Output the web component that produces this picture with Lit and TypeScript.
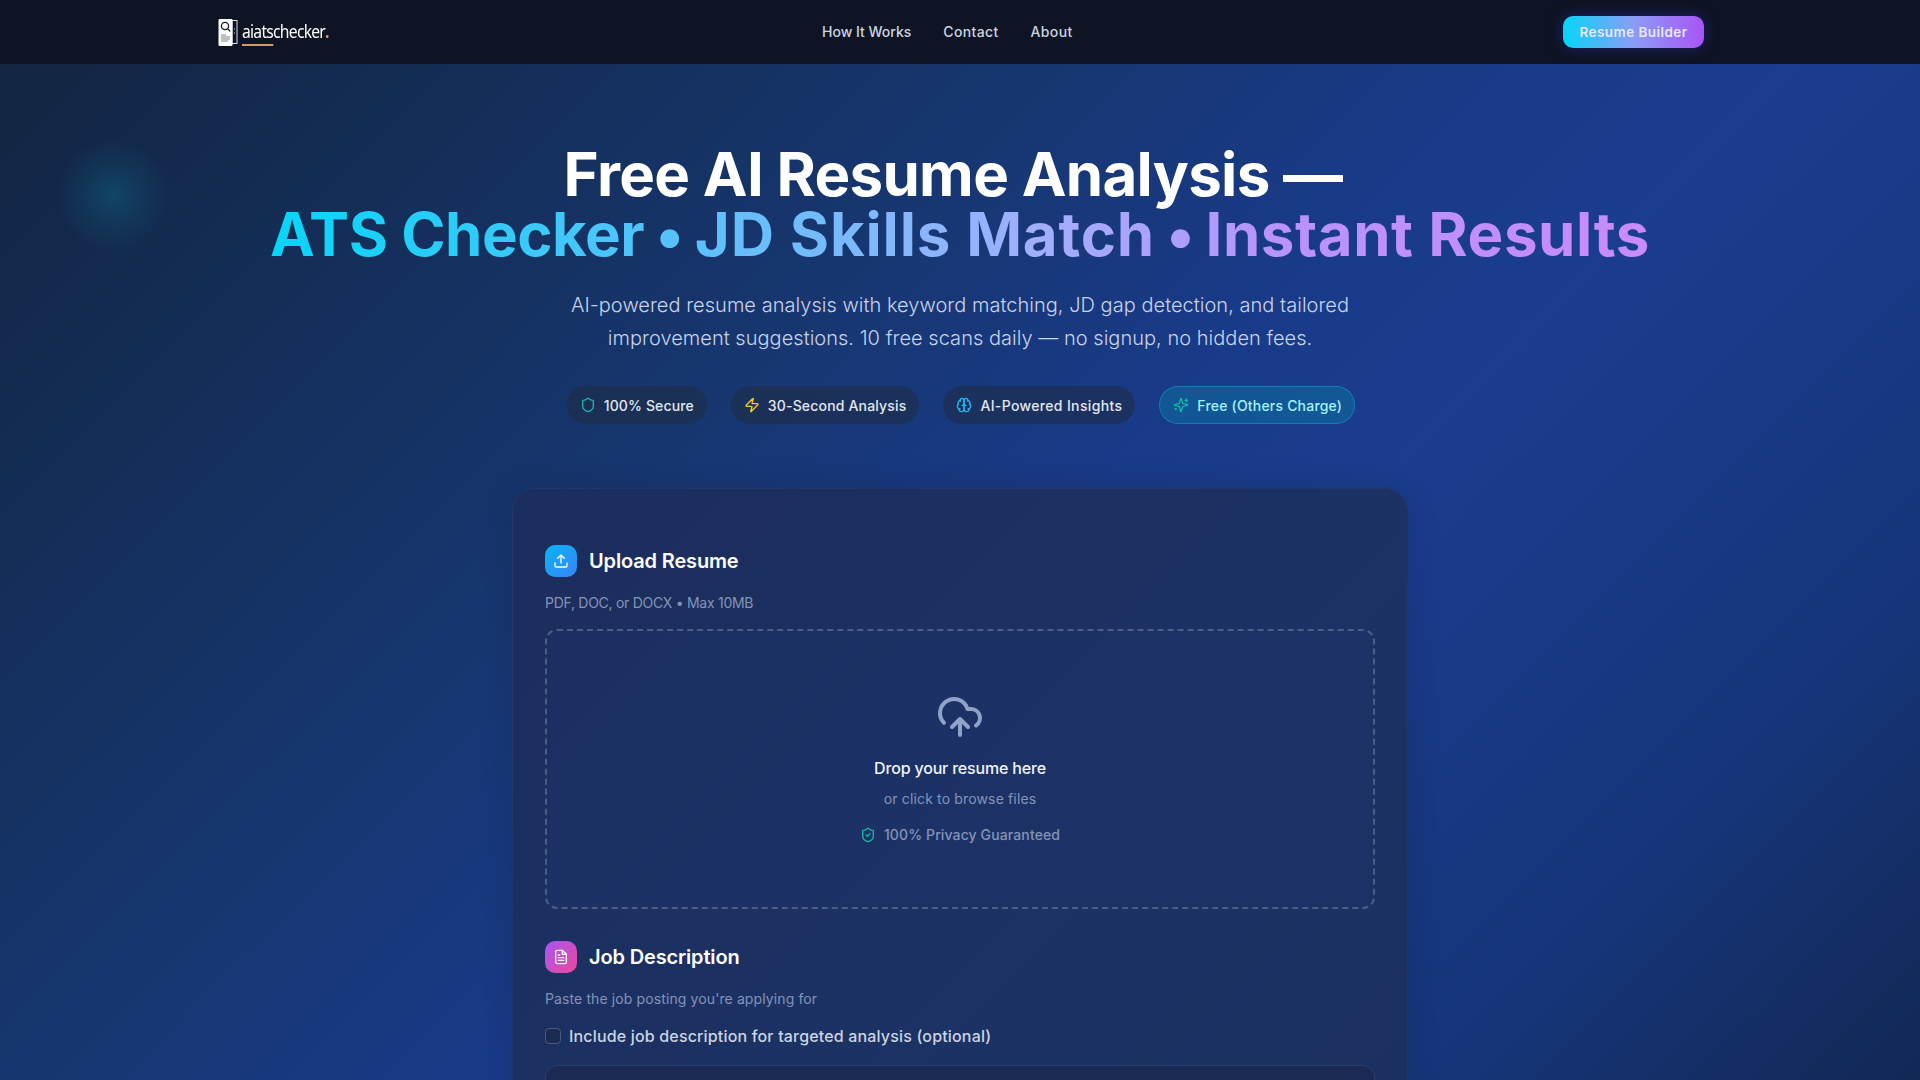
import { LitElement, html, css, svg } from "lit";
import { customElement } from "lit/decorators.js";

const ic = (size: number, color: string, body: unknown, sw = 2) => html`<svg width=${size} height=${size} viewBox="0 0 24 24" fill="none" stroke=${color} stroke-width=${sw} stroke-linecap="round" stroke-linejoin="round">${body}</svg>`;
const shield = svg`<path d="M20 13c0 5-3.5 7.5-7.66 8.95a1 1 0 0 1-.67-.01C7.5 20.5 4 18 4 13V6a1 1 0 0 1 1-1c2 0 4.5-1.2 6.24-2.72a1.17 1.17 0 0 1 1.52 0C14.51 3.81 17 5 19 5a1 1 0 0 1 1 1z"/>`;

@customElement("app-root")
export class AppRoot extends LitElement {
  static styles = css`
    :host { display: block; height: 100vh; overflow: hidden; position: relative; font-family: Inter, "Liberation Sans", sans-serif; color: #fff;
      background: radial-gradient(circle at 113px 195px, rgba(6,182,212,.2) 0, rgba(6,182,212,.09) 28px, rgba(6,182,212,0) 56px),
        linear-gradient(135deg, #12243e 0%, #142e58 19%, #17366f 36%, #193a88 52%, #1a3d90 62%, #16357a 83%, #122855 100%); }
    header { height: 64px; background: #0f1424; }
    .bar { box-sizing: border-box; max-width: 1536px; height: 64px; margin: 0 auto; padding: 0 24px; display: flex; align-items: center; justify-content: space-between; position: relative; }
    .logo { display: flex; align-items: center; gap: 4px; margin-left: 2px; }
    .word { position: relative; display: inline-block; transform: scaleX(.87); transform-origin: left center; font-family: "Noto Sans", sans-serif; font-size: 18px; letter-spacing: -0.85px; color: #fff; line-height: 24px; margin-top: -3px; }
    .word i { font-style: normal; color: #c59a6d; font-weight: 700; }
    .word::after { content: ""; position: absolute; left: 0; bottom: -3px; width: 36px; height: 2px; background: #d09a63; }
    nav { position: absolute; left: 822px; top: -1px; height: 64px; display: flex; align-items: center; gap: 32px; margin-left: -192px; font-size: 14px; font-weight: 500; color: #cbd5e1; letter-spacing: .35px; }
    nav .how { letter-spacing: 0; }
    .cta { height: 32px; width: 141px; border-radius: 10px; display: flex; align-items: center; justify-content: center; font-size: 13.5px; font-weight: 600; letter-spacing: .45px; color: #e6e9ff; background: linear-gradient(90deg, #06d6f7, #8b9cf6 50%, #a855f7); box-shadow: 0 0 14px rgba(40,60,240,.35); }
    .hero { text-align: center; padding-top: 80px; }
    h1 { margin: 0; font-size: 60px; line-height: 60px; font-weight: 700; letter-spacing: -.7px; }
    .l1 { display: block; padding-right: 14px; }
    .grad { display: block; width: max-content; margin: 0 auto; word-spacing: -2.2px; background: linear-gradient(90deg, #06d6f7, #9fb0fd 55%, #b794fb 72%, #c98bf9); -webkit-background-clip: text; background-clip: text; color: transparent; }
    .g1 { letter-spacing: -.48px; word-spacing: 0; }
    .g2 { letter-spacing: .8px; word-spacing: 0; }
    .g3 { letter-spacing: .55px; word-spacing: 0; }
    .lede { margin: 25px auto 0; font-size: 20px; line-height: 33px; font-weight: 300; color: #c8d3e8; letter-spacing: .03px; width: 820px; }
    .pills { display: flex; justify-content: center; gap: 24px; margin: 31px 0 0 2px; }
    .pill { height: 38px; box-sizing: border-box; padding: 0 13px; display: flex; align-items: center; gap: 8px; border-radius: 19px; background: rgba(30,41,59,.5); font-size: 14px; font-weight: 500; color: #e2e8f0; }
    .pill.s1 { letter-spacing: .13px; }
    .pill.s2 { letter-spacing: .17px; }
    .pill.s3 { letter-spacing: .35px; }
    .pill.free { letter-spacing: .2px; padding: 0 12px 0 13px; background: rgba(6,140,170,.35); border: 1px solid rgba(34,211,238,.3); color: #a5f3fc; }
    .card { box-sizing: border-box; width: 896px; margin: 64px auto 0; height: 700px; padding: 56px 32px 0; border-radius: 24px; background: linear-gradient(135deg, #1b2d5c, #1c3264 60%, #1b3060); box-shadow: 0 0 30px rgba(15,23,42,.2); border: 1px solid rgba(255,255,255,.03); }
    .head { display: flex; align-items: center; gap: 12px; }
    .tile { width: 32px; height: 32px; border-radius: 10px; display: flex; align-items: center; justify-content: center; }
    .tile.a { background: linear-gradient(135deg, #06b6f4, #3b82f6); }
    .tile.b { background: linear-gradient(135deg, #a855f7, #ec4899); }
    h2 { margin: 0; font-size: 20px; line-height: 28px; font-weight: 600; color: #fff; letter-spacing: -.15px; }
    .sub { margin-top: 16px; font-size: 14px; line-height: 20px; color: #8494b8; letter-spacing: -.28px; }
    .sub.b { letter-spacing: .11px; }
    .drop { box-sizing: border-box; height: 280px; margin-top: 16px; border: 2px dashed #4b5f85; border-radius: 12px; display: flex; flex-direction: column; align-items: center; padding-top: 62px; background: rgba(30,58,138,.1); }
    .d1 { margin-top: 15px; font-size: 16px; line-height: 24px; font-weight: 500; letter-spacing: -.18px; color: #f1f5f9; }
    .d2 { margin-top: 9px; font-size: 14px; line-height: 20px; color: #8494b8; letter-spacing: .15px; }
    .d3 { margin-top: 16px; display: flex; align-items: center; gap: 8px; font-size: 14px; line-height: 20px; color: #8494b8; letter-spacing: .12px; font-weight: 500; }
    .job { margin-top: 32px; }
    .chk { display: flex; align-items: center; gap: 8px; margin-top: 17px; font-size: 16px; line-height: 20px; font-weight: 500; color: #cbd5e1; letter-spacing: .165px; }
    .box { width: 16px; height: 16px; box-sizing: border-box; border: 1px solid #475a80; border-radius: 4px; background: #1b2a4f; }
    .ta { height: 160px; margin-top: 19px; border: 1px solid #2b3d6a; border-radius: 12px; background: #1a2a55; }
  `;
  render() {
    return html`
      <header><div class="bar">
        <div class="logo">
          <svg width="20" height="27" viewBox="0 0 20 27">
            <rect x="14" y="1.5" width="5" height="23" fill="none" stroke="#d8dce4" stroke-width="1"/>
            <rect x="0.5" y="0" width="14" height="27" rx="1" fill="#fff"/>
            <circle cx="7" cy="7" r="3.6" fill="none" stroke="#111827" stroke-width="1.3"/>
            <path d="M9.6 9.6l2.6 2.8" stroke="#111827" stroke-width="1.3"/>
            <path d="M3 16h5M3 18h9M3 20h9M3 22h7" stroke="#7b818c" stroke-width="1.2"/>
            <circle cx="16.5" cy="10" r=".7" fill="#aab"/><circle cx="16.5" cy="14" r=".7" fill="#aab"/>
          </svg>
          <span class="word">aiatschecker<i>.</i></span>
        </div>
        <nav><span class="how">How It Works</span><span>Contact</span><span>About</span></nav>
        <div class="cta">Resume Builder</div>
      </div></header>
      <section class="hero">
        <h1><span class="l1">Free AI Resume Analysis —</span><span class="grad"><span class="g1">ATS Checker</span> <span class="g1">•</span> <span class="g2">JD Skills Match</span> <span class="g1">•</span> <span class="g3">Instant Results</span></span></h1>
        <p class="lede">AI-powered resume analysis with keyword matching, JD gap detection, and tailored improvement suggestions. 10 free scans daily — no signup, no hidden fees.</p>
        <div class="pills">
          <div class="pill s1">${ic(16, "#14b8a6", shield)}100% Secure</div>
          <div class="pill s2">${ic(16, "#facc15", svg`<path d="M4 14a1 1 0 0 1-.78-1.63l9.9-10.2a.5.5 0 0 1 .86.46l-1.92 6.02A1 1 0 0 0 13 10h7a1 1 0 0 1 .78 1.63l-9.9 10.2a.5.5 0 0 1-.86-.46l1.92-6.02A1 1 0 0 0 11 14z"/>`)}30-Second Analysis</div>
          <div class="pill s3">${ic(16, "#22b8f0", svg`<path d="M12 5a3 3 0 1 0-5.997.125 4 4 0 0 0-2.526 5.77 4 4 0 0 0 .556 6.588A4 4 0 1 0 12 18Z"/><path d="M12 5a3 3 0 1 1 5.997.125 4 4 0 0 1 2.526 5.77 4 4 0 0 1-.556 6.588A4 4 0 1 1 12 18Z"/><path d="M15 13a4.5 4.5 0 0 1-3-4 4.5 4.5 0 0 1-3 4"/><path d="M17.599 6.5a3 3 0 0 0 .399-1.375"/><path d="M6.003 5.125A3 3 0 0 0 6.401 6.5"/><path d="M3.477 10.896a4 4 0 0 1 .585-.396"/><path d="M19.938 10.5a4 4 0 0 1 .585.396"/><path d="M6 18a4 4 0 0 1-1.967-.516"/><path d="M19.967 17.484A4 4 0 0 1 18 18"/>`)}AI-Powered Insights</div>
          <div class="pill free">${ic(16, "#14b8a6", svg`<path d="M9.937 15.5A2 2 0 0 0 8.5 14.063l-6.135-1.582a.5.5 0 0 1 0-.962L8.5 9.936A2 2 0 0 0 9.937 8.5l1.582-6.135a.5.5 0 0 1 .963 0L14.063 8.5A2 2 0 0 0 15.5 9.937l6.135 1.581a.5.5 0 0 1 0 .964L15.5 14.063a2 2 0 0 0-1.437 1.437l-1.582 6.135a.5.5 0 0 1-.963 0z"/><path d="M20 3v4M22 5h-4M4 17v2M5 18H3"/>`)}Free (Others Charge)</div>
        </div>
      </section>
      <section class="card">
        <div class="head"><div class="tile a">${ic(16, "#fff", svg`<path d="M12 3v12M17 8l-5-5-5 5M21 15v4a2 2 0 0 1-2 2H5a2 2 0 0 1-2-2v-4"/>`)}</div><h2>Upload Resume</h2></div>
        <div class="sub">PDF, DOC, or DOCX • Max 10MB</div>
        <div class="drop">
          ${ic(48, "#8fa3c8", svg`<path d="M12 13v8M4 14.899A7 7 0 1 1 15.71 8h1.79a4.5 4.5 0 0 1 2.5 8.242M8 17l4-4 4 4"/>`)}
          <div class="d1">Drop your resume here</div>
          <div class="d2">or click to browse files</div>
          <div class="d3">${ic(16, "#14b8a6", svg`<path d="M20 13c0 5-3.5 7.5-7.66 8.95a1 1 0 0 1-.67-.01C7.5 20.5 4 18 4 13V6a1 1 0 0 1 1-1c2 0 4.5-1.2 6.24-2.72a1.17 1.17 0 0 1 1.52 0C14.51 3.81 17 5 19 5a1 1 0 0 1 1 1z"/><path d="m9 12 2 2 4-4"/>`)}100% Privacy Guaranteed</div>
        </div>
        <div class="job">
          <div class="head"><div class="tile b">${ic(16, "#fff", svg`<path d="M14 2H6a2 2 0 0 0-2 2v16a2 2 0 0 0 2 2h12a2 2 0 0 0 2-2V8z"/><path d="M14 2v6h6M16 13H8M16 17H8M10 9H8"/>`)}</div><h2>Job Description</h2></div>
          <div class="sub b">Paste the job posting you're applying for</div>
          <div class="chk"><span class="box"></span>Include job description for targeted analysis (optional)</div>
          <div class="ta"></div>
        </div>
      </section>
    `;
  }
}
